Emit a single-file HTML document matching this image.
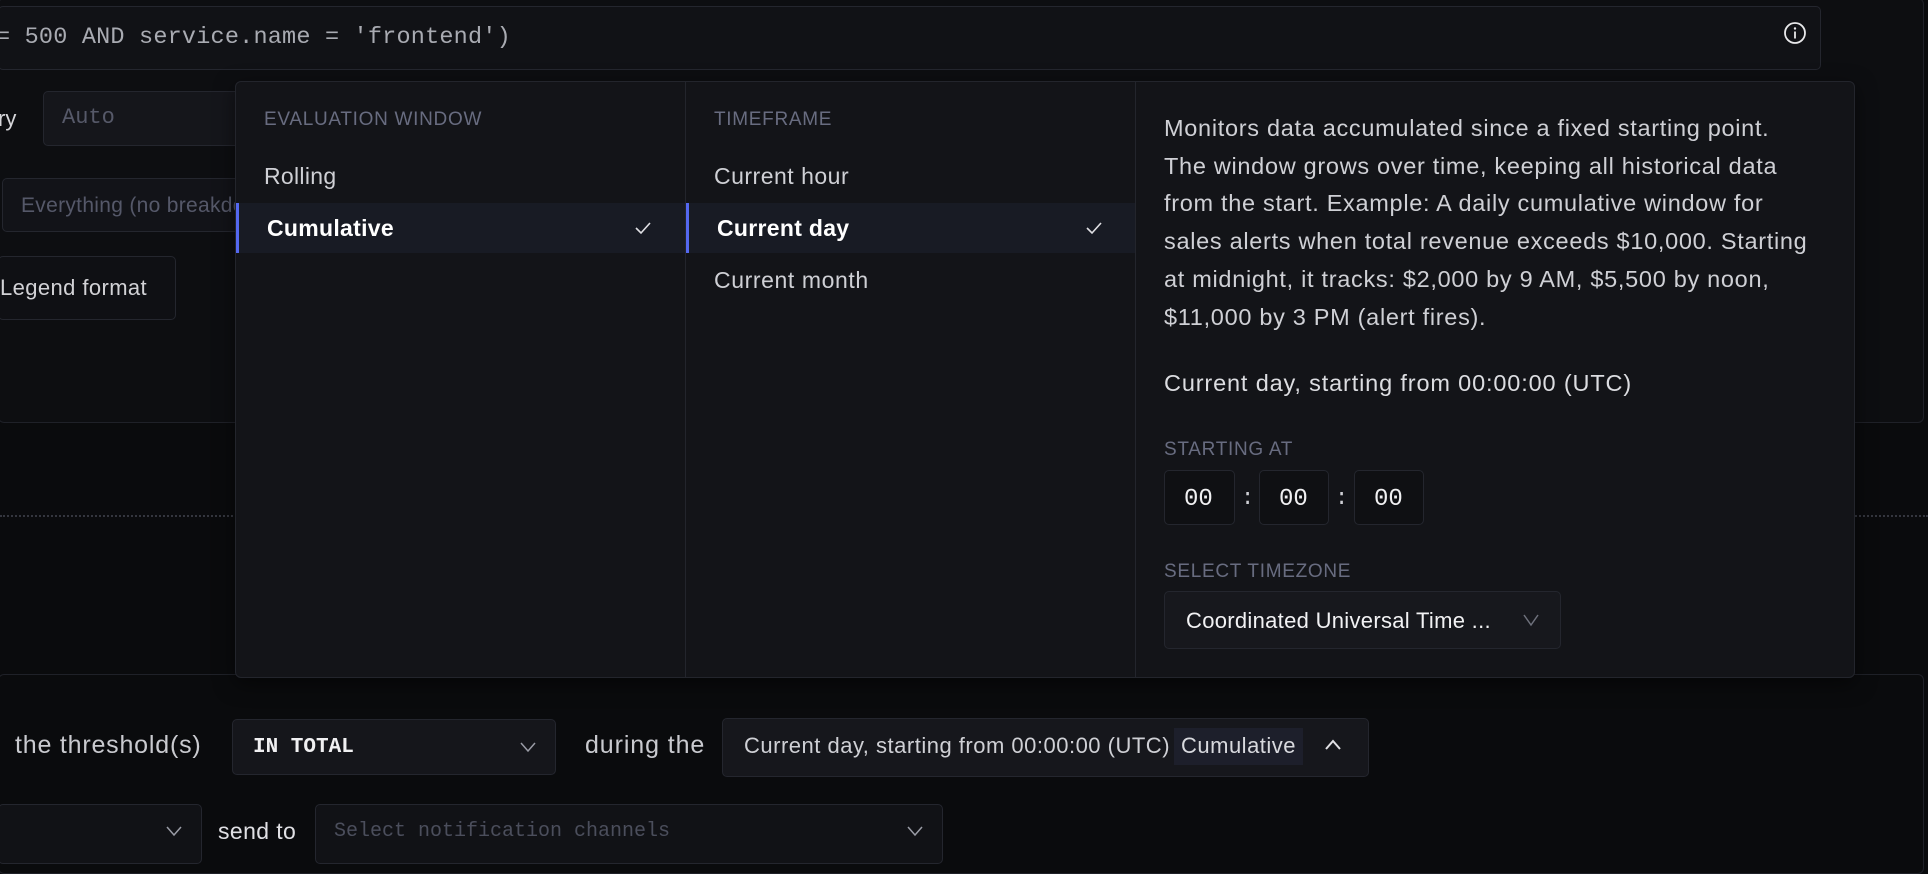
<!DOCTYPE html>
<html><head><meta charset="utf-8"><style>
*{box-sizing:border-box;margin:0;padding:0}
body{width:1928px;height:836px;background:#0a0b0d;position:relative;overflow:hidden;font-family:"Liberation Sans",sans-serif;color:#cfd0d5}
.a{position:absolute}
.mono{font-family:"Liberation Mono",monospace}
.box{position:absolute;background:#14151a;border:1px solid #24262e;border-radius:5px}
.t{position:absolute;white-space:nowrap;line-height:1}
.hdr{font-size:19px;color:#686c80;letter-spacing:.7px}
</style></head><body>
<!-- upper panel -->
<div class="a" style="left:-2px;top:-2px;width:1926px;height:425px;background:#0d0e11;border:1px solid #1f2128;border-radius:6px"></div>
<div class="box" style="left:-2px;top:6px;width:1823px;height:64px;background:#111216"></div>
<div class="t mono" style="left:-4px;top:26px;font-size:23.5px;letter-spacing:.2px;color:#a9abb2">= 500 AND service.name = 'frontend')</div>
<svg class="a" style="left:1783px;top:21px" width="24" height="24" viewBox="0 0 24 24"><circle cx="12" cy="12" r="10" fill="none" stroke="#e8e8ea" stroke-width="1.8"/><circle cx="12" cy="7.5" r="1.2" fill="#e8e8ea"/><path d="M12 10.5v7" stroke="#e8e8ea" stroke-width="1.8"/></svg>
<div class="t" style="left:-2px;top:108px;font-size:22px;color:#d6d6da">ry</div>
<div class="box" style="left:43px;top:91px;width:220px;height:55px;background:#15161b"></div>
<div class="t mono" style="left:62px;top:107px;font-size:22px;color:#565969">Auto</div>
<div class="box" style="left:2px;top:178px;width:260px;height:54px;background:#121318"></div>
<div class="t" style="left:21px;top:195px;font-size:21px;letter-spacing:.3px;color:#555869">Everything (no breakdown)</div>
<div class="box" style="left:-2px;top:256px;width:178px;height:64px;background:#0f1014"></div>
<div class="t" style="left:0;top:277px;font-size:22px;letter-spacing:.4px;color:#d2d2d6">Legend format</div>
<!-- dotted -->
<div class="a" style="left:0;top:515px;width:1928px;border-top:2px dotted #34363e"></div>
<!-- lower panel -->
<div class="a" style="left:-2px;top:674px;width:1926px;height:200px;border:1px solid #1f2128;border-radius:6px"></div>
<div class="t" style="left:15px;top:733px;font-size:25px;letter-spacing:.8px;color:#c9cacf">the threshold(s)</div>
<div class="box" style="left:232px;top:719px;width:324px;height:56px;background:#15161b"></div>
<div class="t mono" style="left:253px;top:737px;font-size:21px;color:#f0f0f2;font-weight:bold">IN TOTAL</div>
<svg class="a" style="left:519px;top:740px" width="18" height="14"><path d="M2 3l7 8 7-8" fill="none" stroke="#9a9ca6" stroke-width="1.5"/></svg>
<div class="t" style="left:585px;top:733px;font-size:25px;letter-spacing:.9px;color:#c9cacf">during the</div>
<div class="box" style="left:722px;top:718px;width:647px;height:59px;background:#16171c"></div>
<div class="t" style="left:744px;top:735px;font-size:22px;letter-spacing:.5px;color:#cfd0d5">Current day, starting from 00:00:00 (UTC)</div>
<div class="a" style="left:1174px;top:728px;width:129px;height:37px;background:#1d1f2b"></div>
<div class="t" style="left:1181px;top:735px;font-size:22px;letter-spacing:.5px;color:#d8d9de">Cumulative</div>
<svg class="a" style="left:1324px;top:738px" width="18" height="14"><path d="M2 11l7-8 7 8" fill="none" stroke="#e0e0e4" stroke-width="2"/></svg>
<div class="box" style="left:-2px;top:804px;width:204px;height:60px;background:#111216"></div>
<svg class="a" style="left:165px;top:824px" width="18" height="14"><path d="M2 3l7 8 7-8" fill="none" stroke="#9a9ca6" stroke-width="1.5"/></svg>
<div class="t" style="left:218px;top:820px;font-size:23px;letter-spacing:.4px;color:#e0e0e4">send to</div>
<div class="box" style="left:315px;top:804px;width:628px;height:60px;background:#111216"></div>
<div class="t mono" style="left:334px;top:822px;font-size:20px;color:#4b4e5c">Select notification channels</div>
<svg class="a" style="left:906px;top:824px" width="18" height="14"><path d="M2 3l7 8 7-8" fill="none" stroke="#9a9ca6" stroke-width="1.5"/></svg>
<!-- popup -->
<div class="a" style="left:235px;top:81px;width:1620px;height:597px;background:#131418;border:1px solid #23252c;border-radius:6px;box-shadow:0 6px 20px rgba(0,0,0,.5)"></div>
<div class="a" style="left:685px;top:82px;width:1px;height:595px;background:#23252c"></div>
<div class="a" style="left:1135px;top:82px;width:1px;height:595px;background:#23252c"></div>
<div class="t hdr" style="left:264px;top:110px">EVALUATION WINDOW</div>
<div class="t" style="left:264px;top:165px;font-size:23px;letter-spacing:.3px;color:#cfd0d5">Rolling</div>
<div class="a" style="left:236px;top:203px;width:449px;height:50px;background:#181b24;border-left:3px solid #5468f0"></div>
<div class="t" style="left:267px;top:217px;font-size:23px;letter-spacing:.3px;color:#fff;font-weight:bold">Cumulative</div>
<svg class="a" style="left:634px;top:220px" width="18" height="16"><path d="M2 8l5 5 9-10" fill="none" stroke="#e0e0e4" stroke-width="1.6"/></svg>
<div class="t hdr" style="left:714px;top:110px">TIMEFRAME</div>
<div class="t" style="left:714px;top:165px;font-size:23px;letter-spacing:.5px;color:#cfd0d5">Current hour</div>
<div class="a" style="left:686px;top:203px;width:449px;height:50px;background:#181b24;border-left:3px solid #5468f0"></div>
<div class="t" style="left:717px;top:217px;font-size:23px;letter-spacing:.3px;color:#fff;font-weight:bold">Current day</div>
<svg class="a" style="left:1085px;top:220px" width="18" height="16"><path d="M2 8l5 5 9-10" fill="none" stroke="#e0e0e4" stroke-width="1.6"/></svg>
<div class="t" style="left:714px;top:269px;font-size:23px;letter-spacing:.6px;color:#cfd0d5">Current month</div>
<div class="a" style="left:1164px;top:110px;font-size:23.5px;letter-spacing:.7px;line-height:37.7px;color:#cfd0d5;white-space:nowrap">Monitors data accumulated since a fixed starting point.<br>The window grows over time, keeping all historical data<br>from the start. Example: A daily cumulative window for<br>sales alerts when total revenue exceeds $10,000. Starting<br>at midnight, it tracks: $2,000 by 9 AM, $5,500 by noon,<br>$11,000 by 3 PM (alert fires).</div>
<div class="t" style="left:1164px;top:372px;font-size:23.5px;letter-spacing:.85px;color:#dcdde1">Current day, starting from 00:00:00 (UTC)</div>
<div class="t hdr" style="left:1164px;top:440px">STARTING AT</div>
<div class="box" style="left:1164px;top:470px;width:71px;height:55px;background:#0f1013"></div>
<div class="box" style="left:1259px;top:470px;width:70px;height:55px;background:#0f1013"></div>
<div class="box" style="left:1354px;top:470px;width:70px;height:55px;background:#0f1013"></div>
<div class="t mono" style="left:1184px;top:488px;font-size:24px;color:#f0f0f2">00</div>
<div class="t mono" style="left:1279px;top:488px;font-size:24px;color:#f0f0f2">00</div>
<div class="t mono" style="left:1374px;top:488px;font-size:24px;color:#f0f0f2">00</div>
<div class="t mono" style="left:1241px;top:488px;font-size:22px;color:#cfd0d5">:</div>
<div class="t mono" style="left:1335px;top:488px;font-size:22px;color:#cfd0d5">:</div>
<div class="t hdr" style="left:1164px;top:562px">SELECT TIMEZONE</div>
<div class="box" style="left:1164px;top:591px;width:397px;height:58px;background:#17181d"></div>
<div class="t" style="left:1186px;top:610px;font-size:22px;letter-spacing:.3px;color:#f2f2f4">Coordinated Universal Time ...</div>
<svg class="a" style="left:1522px;top:612px" width="18" height="16"><path d="M2 3l7 10 7-10" fill="none" stroke="#6e717c" stroke-width="1.5"/></svg>
</body></html>
